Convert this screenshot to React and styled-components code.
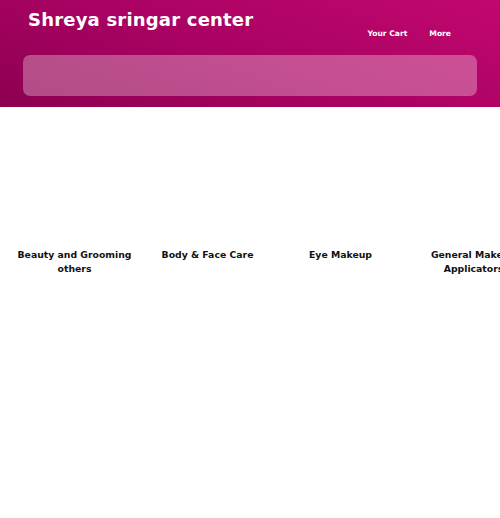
import React from 'react';
import styled, { createGlobalStyle } from 'styled-components';

const GlobalStyle = createGlobalStyle`
  body {
    margin: 0;
    background: #fff;
    font-family: "DejaVu Sans", "Noto Sans", sans-serif;
    overflow-x: hidden;
  }
`;

const Header = styled.header`
  height: 107px;
  box-sizing: border-box;
  padding: 7px 23px 0 23px;
  background: linear-gradient(20deg, #8c0050 0%, #a80262 45%, #c2076f 100%);
`;

const TopRow = styled.div`
  display: flex;
  align-items: flex-start;
  justify-content: space-between;
`;

const Title = styled.h1`
  margin: 0 0 0 5px;
  color: #fff;
  font-size: 18px;
  font-weight: 700;
  letter-spacing: 0.2px;
  line-height: 26px;
`;

const Nav = styled.nav`
  display: flex;
  gap: 22px;
  margin: 22px 26px 0 0;
`;

const NavLink = styled.a`
  color: #fff;
  font-size: 7.6px;
  font-weight: 700;
  cursor: pointer;
`;

const Search = styled.div`
  margin-top: 17px;
  height: 41px;
  border-radius: 7px;
  background: rgba(255, 255, 255, 0.3);
`;

const Categories = styled.section`
  display: flex;
  padding: 20px 0 0 8px;
  width: 560px;
`;

const Category = styled.div`
  width: 133px;
  flex-shrink: 0;
  display: flex;
  flex-direction: column;
  align-items: center;
`;

const Thumb = styled.div`
  width: 110px;
  height: 120px;
`;

const Label = styled.div`
  margin-top: 1px;
  font-size: 9.3px;
  font-weight: 700;
  color: #111;
  line-height: 14px;
  text-align: center;
`;

const items = [
  'Beauty and Grooming others',
  'Body & Face Care',
  'Eye Makeup',
  'General Makeup Applicators',
];

export default function App() {
  return (
    <>
      <GlobalStyle />
      <Header>
        <TopRow>
          <Title>Shreya sringar center</Title>
          <Nav>
            <NavLink>Your Cart</NavLink>
            <NavLink>More</NavLink>
          </Nav>
        </TopRow>
        <Search />
      </Header>
      <Categories>
        {items.map((t) => (
          <Category key={t}>
            <Thumb />
            <Label>{t}</Label>
          </Category>
        ))}
      </Categories>
    </>
  );
}
